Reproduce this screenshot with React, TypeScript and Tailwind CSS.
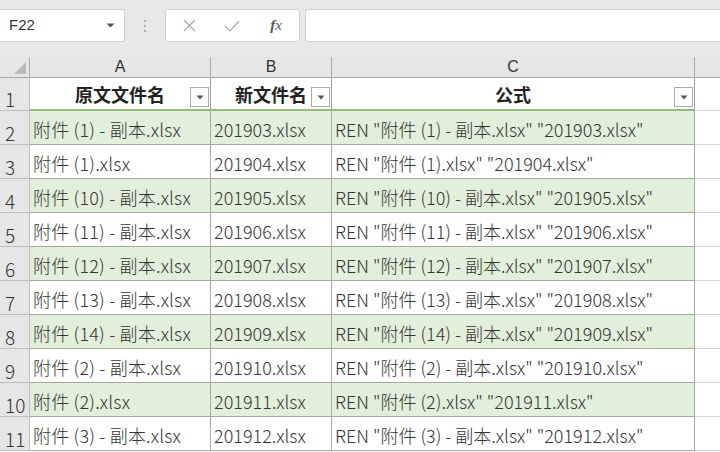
import React from "react";

const rows: [string, string, string][] = [
  ["附件 (1) - 副本.xlsx", "201903.xlsx", "REN \"附件 (1) - 副本.xlsx\" \"201903.xlsx\""],
  ["附件 (1).xlsx", "201904.xlsx", "REN \"附件 (1).xlsx\" \"201904.xlsx\""],
  ["附件 (10) - 副本.xlsx", "201905.xlsx", "REN \"附件 (10) - 副本.xlsx\" \"201905.xlsx\""],
  ["附件 (11) - 副本.xlsx", "201906.xlsx", "REN \"附件 (11) - 副本.xlsx\" \"201906.xlsx\""],
  ["附件 (12) - 副本.xlsx", "201907.xlsx", "REN \"附件 (12) - 副本.xlsx\" \"201907.xlsx\""],
  ["附件 (13) - 副本.xlsx", "201908.xlsx", "REN \"附件 (13) - 副本.xlsx\" \"201908.xlsx\""],
  ["附件 (14) - 副本.xlsx", "201909.xlsx", "REN \"附件 (14) - 副本.xlsx\" \"201909.xlsx\""],
  ["附件 (2) - 副本.xlsx", "201910.xlsx", "REN \"附件 (2) - 副本.xlsx\" \"201910.xlsx\""],
  ["附件 (2).xlsx", "201911.xlsx", "REN \"附件 (2).xlsx\" \"201911.xlsx\""],
  ["附件 (3) - 副本.xlsx", "201912.xlsx", "REN \"附件 (3) - 副本.xlsx\" \"201912.xlsx\""],
];

function FilterButton() {
  return (
    <div className="absolute right-[1px] bottom-[2px] flex h-[20px] w-[19px] items-center justify-center border border-[#a9a9a9] bg-white">
      <svg width="8" height="5" viewBox="0 0 8 5">
        <path d="M0.5 0.5h7L4 4.5z" fill="#555" />
      </svg>
    </div>
  );
}

function RowHead({ n, h }: { n: number; h: string }) {
  return (
    <div
      className={`flex w-[30px] shrink-0 items-end border-r border-b border-[#bdbdbd] bg-[#e6e6e6] pb-[2px] pl-[5px] text-[19px] font-light leading-none text-[#333] ${h}`}
    >
      {n}
    </div>
  );
}

export default function App() {
  return (
    <div
      className="h-[452px] w-[720px] overflow-hidden bg-white"
      style={{ fontFamily: '"Noto Sans CJK SC", "Noto Sans", sans-serif' }}
    >
      {/* toolbar: name box + formula bar */}
      <div className="flex h-[57px] items-start bg-[#e8e8e8] pt-[9px]">
        <div className="flex h-[33px] w-[125px] items-center justify-between rounded-r-[3px] border border-l-0 border-[#d0d0d0] bg-white pr-[9px] pl-[9px]">
          <span className="text-[15px] text-[#333]" style={{ fontFamily: '"Liberation Sans", sans-serif' }}>F22</span>
          <svg width="9" height="5" viewBox="0 0 9 5">
            <path d="M0.5 0.5h8L4.5 4.5z" fill="#555" />
          </svg>
        </div>
        <div className="flex w-[40px] flex-col items-center gap-[3px] pt-[11px]">
          <span className="h-[2px] w-[2px] bg-[#aaa]" />
          <span className="h-[2px] w-[2px] bg-[#aaa]" />
          <span className="h-[2px] w-[2px] bg-[#aaa]" />
        </div>
        <div className="flex h-[33px] w-[135px] items-center rounded-[3px] border border-[#d0d0d0] bg-white">
          <div className="flex w-[44px] justify-center pl-[2px]">
            <svg width="13" height="13" viewBox="0 0 13 13">
              <path d="M1 1l11 11M12 1L1 12" stroke="#aaa" strokeWidth="1.2" fill="none" />
            </svg>
          </div>
          <div className="flex w-[44px] justify-center">
            <svg width="16" height="12" viewBox="0 0 16 12">
              <path d="M1 6l5 5L15 1" stroke="#aaa" strokeWidth="1.2" fill="none" />
            </svg>
          </div>
          <div className="flex w-[44px] justify-center">
            <span className="text-[15px] italic text-[#555]" style={{ fontFamily: '"Liberation Serif", serif' }}>
              <span className="font-bold">f</span>x
            </span>
          </div>
        </div>
        <div className="ml-[5px] h-[33px] flex-1 rounded-l-[3px] border border-r-0 border-[#d0d0d0] bg-white" />
      </div>

      {/* column headers */}
      <div className="flex h-[21px] text-[16px] leading-none text-[#333]" style={{ fontFamily: '"Liberation Sans", sans-serif' }}>
        <div className="relative w-[30px] shrink-0 border-r border-b border-[#a9a9a9] bg-[#e6e6e6]">
          <svg className="absolute right-[3px] bottom-[3px]" width="12" height="12" viewBox="0 0 12 12">
            <path d="M12 0V12H0z" fill="#b9b9b9" />
          </svg>
        </div>
        <div className="flex w-[181px] shrink-0 items-center justify-center border-r border-b border-[#a9a9a9] bg-[#e6e6e6]">A</div>
        <div className="flex w-[121px] shrink-0 items-center justify-center border-r border-b border-[#a9a9a9] bg-[#e6e6e6]">B</div>
        <div className="flex w-[363px] shrink-0 items-center justify-center border-r border-b border-[#a9a9a9] bg-[#e6e6e6]">C</div>
        <div className="flex-1 border-b border-[#a9a9a9] bg-[#e6e6e6]" />
      </div>

      {/* header row */}
      <div className="flex h-[33px] text-[18px] text-[#222]">
        <RowHead n={1} h="h-[33px]" />
        <div className="relative flex w-[181px] shrink-0 items-center justify-center border-r border-b-2 border-r-[#a0a0a0] border-b-[#8cc07a] pt-[2px] font-bold">
          原文文件名
          <FilterButton />
        </div>
        <div className="relative flex w-[121px] shrink-0 items-center justify-center border-r border-b-2 border-r-[#a0a0a0] border-b-[#8cc07a] pt-[2px] font-bold">
          新文件名
          <FilterButton />
        </div>
        <div className="relative flex w-[363px] shrink-0 items-center justify-center border-r border-b-2 border-r-[#a0a0a0] border-b-[#8cc07a] pt-[2px] font-bold">
          公式
          <FilterButton />
        </div>
        <div className="flex-1 border-b border-[#d4d4d4]" />
      </div>

      {/* data rows */}
      {rows.map((r, i) => {
        const bg = i % 2 === 0 ? "bg-[#e2efda]" : "bg-white";
        return (
          <div key={i} className="flex h-[34px] text-[18px] font-light text-[#333]">
            <RowHead n={i + 2} h="h-[34px]" />
            <div className={`flex w-[181px] shrink-0 items-center overflow-hidden whitespace-nowrap border-r border-b border-[#a3aaa0] pt-[3px] pl-[3px] tracking-[0.2px] ${bg}`}>
              {r[0]}
            </div>
            <div className={`flex w-[121px] shrink-0 items-center overflow-hidden whitespace-nowrap border-r border-b border-[#a3aaa0] pt-[3px] pl-[3px] ${bg}`}>
              {r[1]}
            </div>
            <div className={`flex w-[363px] shrink-0 items-center overflow-hidden whitespace-nowrap border-r border-b border-[#a3aaa0] pt-[3px] pl-[3px] ${bg}`}>
              {r[2]}
            </div>
            <div className="flex-1 border-b border-[#d4d4d4]" />
          </div>
        );
      })}
    </div>
  );
}
